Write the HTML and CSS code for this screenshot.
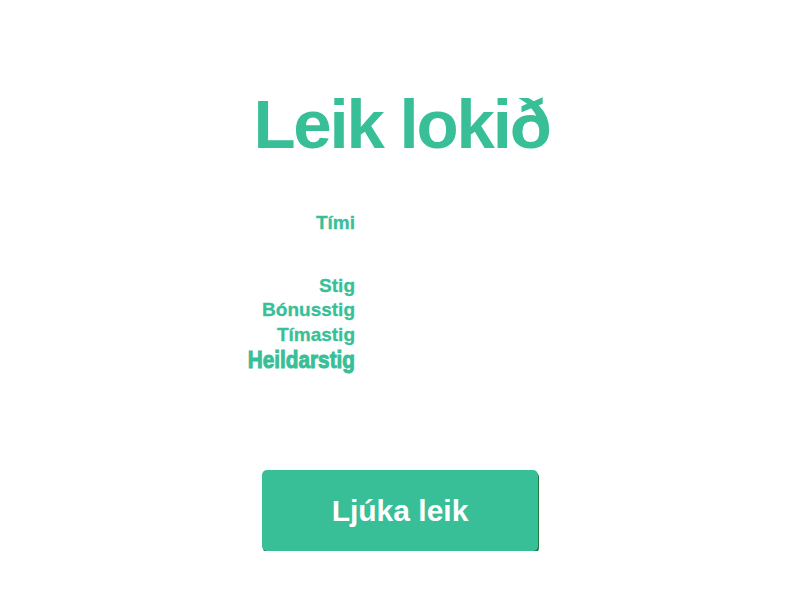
FILE: index.html
```html
<!DOCTYPE html>
<html lang="is">
<head>
<meta charset="utf-8">
<title>Leik lokið</title>
<link rel="stylesheet" href="styles.css">
</head>
<body>
<main class="screen">
  <h1 class="title">Leik lokið</h1>
  <div class="stats">
    <div class="label">Tími</div><div class="value"></div>
    <div class="spacer"></div><div class="spacer"></div>
    <div class="label">Stig</div><div class="value"></div>
    <div class="label">Bónusstig</div><div class="value"></div>
    <div class="label">Tímastig</div><div class="value"></div>
    <div class="label total">Heildarstig</div><div class="value"></div>
  </div>
  <div class="actions">
    <button class="finish" type="button">Ljúka leik</button>
  </div>
</main>
</body>
</html>
```
FILE: styles.css
```css
html, body {
  margin: 0;
  padding: 0;
  background: #ffffff;
}
body {
  font-family: "Liberation Sans", Arial, sans-serif;
  color: #38bf98;
}
.screen {
  display: flex;
  flex-direction: column;
  align-items: center;
  padding-top: 89px;
}
.title {
  margin: 0 0 0 3px;
  font-size: 69px;
  line-height: 71px;
  font-weight: 700;
  letter-spacing: -2.2px;
}
.stats {
  display: grid;
  grid-template-columns: 355px 355px;
  column-gap: 90px;
  margin-top: 51px;
}
.label {
  text-align: right;
  font-size: 19px;
  line-height: 24.5px;
  font-weight: 700;
  letter-spacing: 0;
  -webkit-text-stroke: 0.3px #38bf98;
}
.spacer {
  height: 38px;
}
.total {
  font-size: 24px;
  line-height: 26px;
  letter-spacing: 0;
  -webkit-text-stroke: 1px #38bf98;
  transform: scaleX(0.865);
  transform-origin: right center;
}
.actions {
  margin-top: 97px;
}
.finish {
  display: block;
  width: 276px;
  height: 81px;
  border: none;
  border-radius: 5px;
  background: #38bf98;
  box-shadow: 1px 2px 0 #1e7d3e;
  color: #ffffff;
  font-family: "Liberation Sans", Arial, sans-serif;
  font-size: 30px;
  font-weight: 700;
  cursor: pointer;
}
```
